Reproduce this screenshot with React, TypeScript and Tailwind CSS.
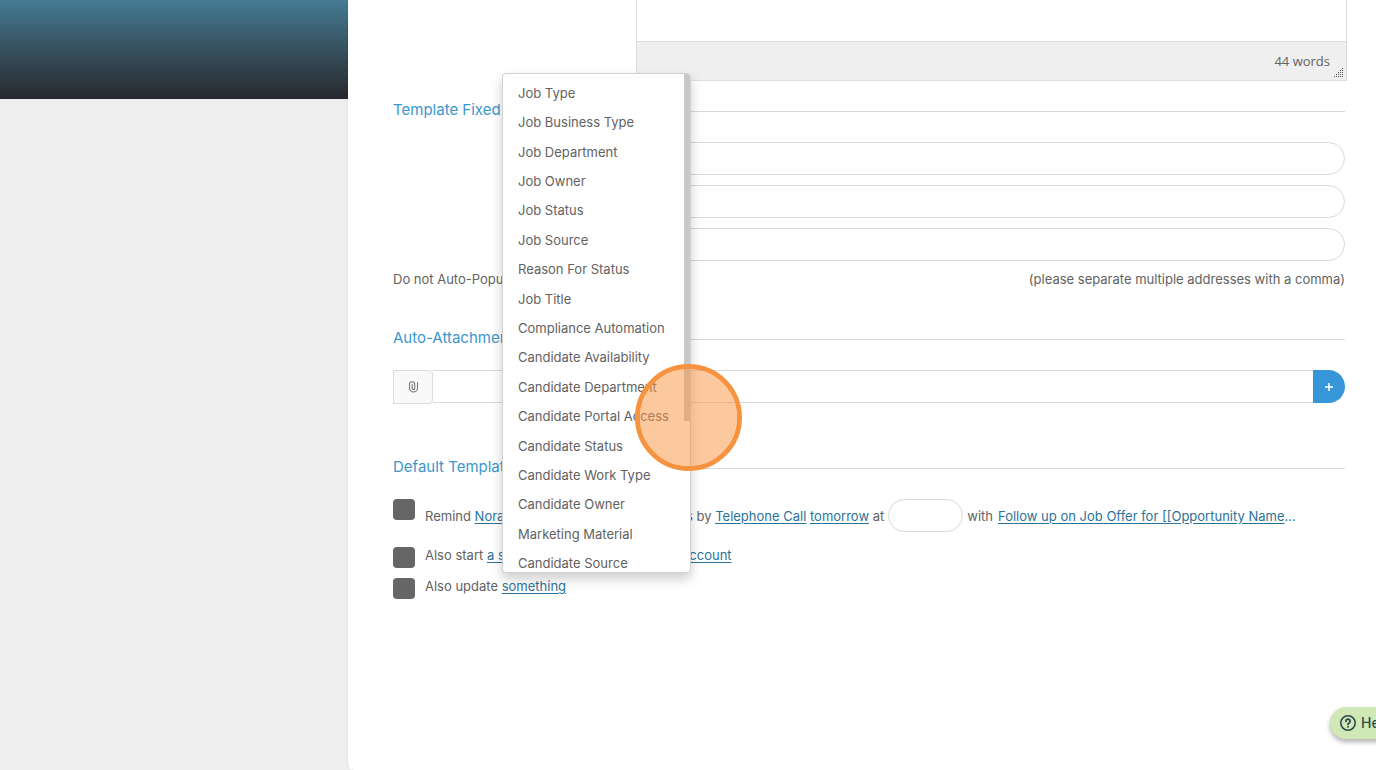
import React from "react";

const menuItems = [
  "Job Type",
  "Job Business Type",
  "Job Department",
  "Job Owner",
  "Job Status",
  "Job Source",
  "Reason For Status",
  "Job Title",
  "Compliance Automation",
  "Candidate Availability",
  "Candidate Department",
  "Candidate Portal Access",
  "Candidate Status",
  "Candidate Work Type",
  "Candidate Owner",
  "Marketing Material",
  "Candidate Source",
];

const resizeDots = [
  [8, 0],
  [6, 2], [8, 2],
  [4, 4], [6, 4], [8, 4],
  [2, 6], [4, 6], [6, 6], [8, 6],
  [0, 8], [2, 8], [4, 8], [6, 8], [8, 8],
];

function SectionHeading({ children }: { children: React.ReactNode }) {
  return (
    <div className="flex h-6 items-center gap-3">
      <h2 className="text-[15px] leading-6 whitespace-nowrap text-[#3b97cf]">{children}</h2>
      <div className="mt-0.5 h-px flex-1 bg-[#d9d9d9]" />
    </div>
  );
}

function TextLink({ children }: { children: React.ReactNode }) {
  return (
    <a href="#" className="text-[#2b7299] underline underline-offset-2">
      {children}
    </a>
  );
}

function Tick({ id, label }: { id: string; label: string }) {
  return (
    <input
      id={id}
      type="checkbox"
      aria-label={label}
      className="h-[21px] w-[22px] shrink-0 appearance-none rounded bg-[#666666]"
    />
  );
}

function FieldMenu() {
  return (
    <div className="absolute top-[73px] left-[154px] z-10 h-[500px] w-[189px] overflow-hidden rounded-sm border border-[#d2d2d2] bg-white pt-1 shadow-[0_6px_12px_rgba(0,0,0,0.2)]">
      <ul className="grid h-[500px] auto-rows-fr">
        {menuItems.map((item) => (
          <li key={item} className="flex items-center">
            <button type="button" className="w-full px-[15px] text-left whitespace-nowrap">
              {item}
            </button>
          </li>
        ))}
      </ul>
      <div className="absolute top-0 right-0 h-[347px] w-1.5 bg-[#c8c8c8]" />
    </div>
  );
}

export default function App() {
  return (
    <div className="relative flex min-h-screen overflow-hidden bg-[#eeeeee] font-['Inter',sans-serif] text-[13px] leading-5 text-[#626262]">
      <aside className="w-[348px] shrink-0">
        <div className="h-[99px] bg-linear-to-b from-[#437c93] to-[#27292e]" />
      </aside>

      <main className="relative min-w-0 flex-1 rounded-bl-md bg-white pr-[31px] pl-[45px] shadow-[0_0_2px_rgba(0,0,0,0.15)]">
        <section className="-mr-0.5 ml-[243px] border-x border-b border-[#dddddd]">
          <div className="h-[41px]" />
          <div className="relative flex h-[39px] items-center justify-end border-t border-[#dddddd] bg-[#efefef] pr-4 font-['Open_Sans',sans-serif]">
            44 words
            <svg className="absolute right-[3px] bottom-[3px]" width="9" height="9" fill="#555" aria-hidden="true">
              {resizeDots.map(([x, y]) => (
                <rect key={`${x}-${y}`} x={x} y={y} width="1" height="1" />
              ))}
            </svg>
          </div>
        </section>

        <section className="pt-[17px]">
          <SectionHeading>Template Fixed</SectionHeading>
          <div className="mt-5 ml-[243px] flex flex-col gap-2.5">
            <input aria-label="To" className="h-[33px] w-full rounded-full border border-[#d9d9d9] px-4" />
            <input aria-label="Cc" className="h-[33px] w-full rounded-full border border-[#d9d9d9] px-4" />
            <input aria-label="Bcc" className="h-[33px] w-full rounded-full border border-[#d9d9d9] px-4" />
          </div>
          <div className="mt-2 flex justify-between">
            <span>Do not Auto-Populate</span>
            <span>(please separate multiple addresses with a comma)</span>
          </div>
        </section>

        <section className="pt-[37px]">
          <SectionHeading>Auto-Attachments</SectionHeading>
          <div className="mt-5 flex">
            <div className="flex h-[34px] w-10 items-center justify-center rounded-r-sm border border-[#dcdcdc] bg-[#f9f9f9]">
              <svg width="11" height="12" viewBox="0 0 11 12" fill="none" stroke="#777" strokeWidth="1.1" strokeLinecap="round" aria-hidden="true">
                <path d="M9.500 1.500v5.500a4 4 0 0 1-4 4 4 4 0 0 1-4-4V3.300a2.600 2.600 0 0 1 5.200 0V7.300a1.300 1.300 0 0 1-2.600 0V3.500" />
              </svg>
            </div>
            <input aria-label="Attachment" className="h-[33px] min-w-0 flex-1 border-y border-[#d9d9d9] px-3" />
            <button
              type="button"
              aria-label="Add attachment"
              className="flex h-[33px] w-8 items-center justify-center rounded-r-full bg-[#3795da]"
            >
              <svg width="8" height="8" stroke="#fff" strokeWidth="1.5" aria-hidden="true">
                <path d="M4 0v8M0 4h8" />
              </svg>
            </button>
          </div>
        </section>

        <section className="pt-[51px]">
          <SectionHeading>Default Template</SectionHeading>
          <div className="mt-5 flex gap-2.5">
            <Tick id="remind" label="Remind" />
            <div className="flex h-[33px] min-w-0 items-center whitespace-nowrap">
              <label htmlFor="remind" className="w-[261px]">
                Remind <TextLink>Nora</TextLink>
              </label>
              <span>
                s by <TextLink>Telephone Call</TextLink> <TextLink>tomorrow</TextLink> at
              </span>
              <input aria-label="Time" className="mx-1 h-[33px] w-[75px] rounded-full border border-[#d9d9d9] px-3" />
              <span>with</span>
              <span className="ml-[5px]">
                <TextLink>Follow up on Job Offer for [[Opportunity Name</TextLink>
                <span className="text-[#2b7299]">...</span>
              </span>
            </div>
          </div>
          <div className="mt-[15px] flex gap-2.5">
            <Tick id="start" label="Also start" />
            <div className="-mt-0.5 flex whitespace-nowrap">
              <label htmlFor="start" className="w-[257px]">
                Also start <TextLink>a s</TextLink>
              </label>
              <TextLink>account</TextLink>
            </div>
          </div>
          <div className="mt-2.5 flex gap-2.5">
            <Tick id="update" label="Also update" />
            <label htmlFor="update" className="-mt-0.5">
              Also update <TextLink>something</TextLink>
            </label>
          </div>
        </section>

        <FieldMenu />
        <div className="pointer-events-none absolute top-[364px] left-[287px] z-20 size-[107px] rounded-full border-5 border-[#f7933f] bg-[#f9923d]/50 bg-clip-padding" />
      </main>

      <button
        type="button"
        className="absolute -right-6 bottom-[31px] z-30 flex h-8 w-[70px] items-center gap-[5px] rounded-full bg-[#cfe8b5] pl-2.5 text-sm font-medium text-[#2f4a4f] shadow-[0_3px_5px_rgba(0,0,0,0.3)]"
      >
        <svg className="shrink-0" width="16" height="16" viewBox="0 0 16 16" fill="none" stroke="currentColor" strokeWidth="1.6" strokeLinecap="round" aria-hidden="true">
          <circle cx="8" cy="8" r="7.200" />
          <path strokeWidth="1.9" d="M5.900 6.300a2.100 2.100 0 1 1 3.200 1.700c-.7.400-1.100.700-1.100 1.200" />
          <path strokeWidth="1.9" d="M8 11.700v.1" />
        </svg>
        Help
      </button>
    </div>
  );
}
